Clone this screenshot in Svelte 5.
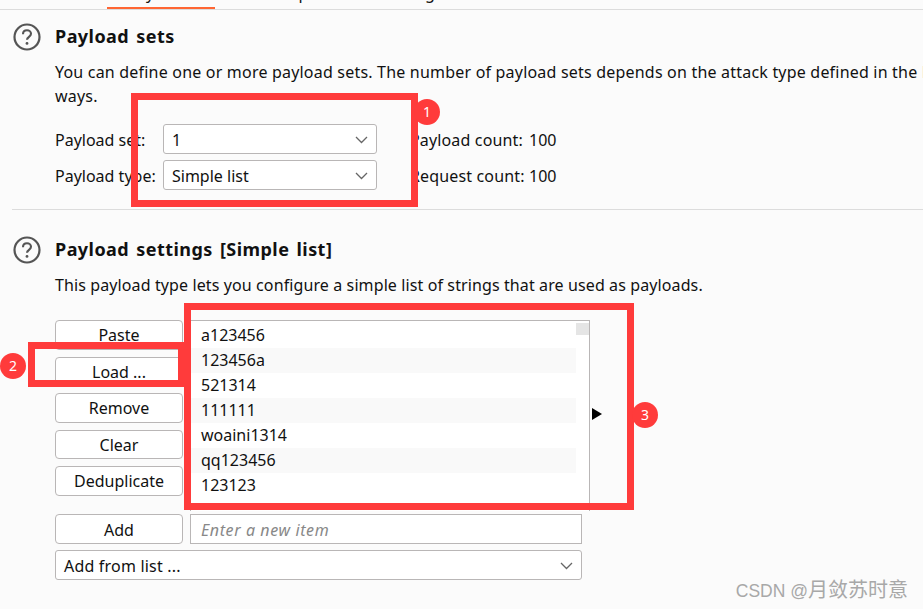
<script>
  const tabs = [
    { label: 'Positions', w: 107 },
    { label: 'Payloads', w: 108, active: true },
    { label: 'Resource pool', w: 127 },
    { label: 'Settings', w: 140 }
  ];
  const items = ['a123456', '123456a', '521314', '111111', 'woaini1314', 'qq123456', '123123'];
  const buttons = ['Paste', 'Load ...', 'Remove', 'Clear', 'Deduplicate'];
</script>

{#snippet help()}
  <svg class="help" width="28" height="28" viewBox="0 0 28 28" aria-hidden="true">
    <circle cx="14" cy="14" r="12.5" fill="none" stroke="#555" stroke-width="2.2" />
    <path d="M10 11.2c0-2.4 1.8-3.9 4-3.9s4 1.4 4 3.5c0 3-4 3-4 6" fill="none" stroke="#555" stroke-width="2.1" />
    <circle cx="14" cy="20.4" r="1.4" fill="#555" />
  </svg>
{/snippet}

{#snippet chevron()}
  <svg class="chev" width="13" height="8" viewBox="0 0 13 8" aria-hidden="true">
    <path d="M1 1l5.500 5.500 5.500-5.500" fill="none" stroke="#666" stroke-width="1.3" />
  </svg>
{/snippet}

<div class="page">
  <div class="tabs">
    {#each tabs as tab}
      <div class="tab" class:active={tab.active} style="width: {tab.w}px">{tab.label}</div>
    {/each}
  </div>

  <section class="sets">
    <div class="head">
      {@render help()}
      <h2>Payload sets</h2>
    </div>
    <p class="desc">You can define one or more payload sets. The number of payload sets depends on the attack type defined in the Positions tab. Various payload types are available<br />ways.</p>
    <div class="set-row">
      <span class="set-label">Payload set:</span>
      <div class="select small"><span>1</span>{@render chevron()}</div>
      <span class="count">Payload count:</span><span>100</span>
    </div>
    <div class="set-row">
      <span class="set-label">Payload type:</span>
      <div class="select small"><span>Simple list</span>{@render chevron()}</div>
      <span class="count">Request count:</span><span>100</span>
    </div>
  </section>

  <section class="settings">
    <div class="head">
      {@render help()}
      <h2>Payload settings [Simple list]</h2>
    </div>
    <p class="desc one">This payload type lets you configure a simple list of strings that are used as payloads.</p>

    <div class="list-row">
      <div class="btns">
        {#each buttons as b}
          <div class="btn">{b}</div>
        {/each}
      </div>
      <div class="listbox">
        <div class="rows">
          {#each items as item}
            <div class="item">{item}</div>
          {/each}
        </div>
        <div class="scroll"><div class="thumb"></div></div>
      </div>
      <svg class="arrow" width="10" height="12" viewBox="0 0 10 12" aria-hidden="true">
        <path d="M0 0l10 6L0 12z" fill="#000" />
      </svg>
    </div>

    <div class="add-row">
      <div class="btn">Add</div>
      <div class="input">Enter a new item</div>
    </div>
    <div class="select wide"><span>Add from list ...</span>{@render chevron()}</div>
  </section>

  <div class="mark m1"></div>
  <div class="mark m2"></div>
  <div class="mark m3"></div>
  <div class="badge b1">1</div>
  <div class="badge b2">2</div>
  <div class="badge b3">3</div>
  <div class="watermark">CSDN @<span class="cjk">月敛苏时意</span></div>
</div>

<style>
  :global(body) {
    margin: 0;
    background: #fbfbfb;
  }

  .page {
    position: relative;
    width: 923px;
    height: 609px;
    overflow: hidden;
    background: #fbfbfb;
    color: #111;
    font-family: "Noto Sans", "Open Sans", sans-serif;
    font-size: 16px;
    line-height: 24px;
  }

  /* tab strip, only the bottom of it is left in the crop */
  .tabs {
    display: flex;
    align-items: flex-end;
    height: 10px;
    overflow: hidden;
    box-sizing: border-box;
    border-bottom: 1px solid #dcdcdc;
  }

  .tab {
    flex: none;
    height: 9px;
    box-sizing: border-box;
    padding-bottom: 7px;
    display: flex;
    align-items: flex-end;
    justify-content: center;
    line-height: 18px;
  }

  .tab.active {
    padding-bottom: 5px;
    border-bottom: 2px solid #ff6633;
  }

  .sets {
    box-sizing: border-box;
    height: 200px;
    margin-left: 12px;
    padding: 13px 0 0 0;
    border-bottom: 1px solid #dcdcdc;
  }

  .settings {
    margin-left: 12px;
    padding-top: 26px;
  }

  .head {
    display: flex;
    align-items: center;
    height: 28px;
  }

  .help {
    flex: none;
    margin: 0 14px 0 1px;
  }

  h2 {
    margin: -2px 0 0;
    font-size: 18px;
    font-weight: 700;
    letter-spacing: 0.45px;
    word-spacing: 2px;
  }

  .desc {
    margin: 9px 0 0 43px;
    width: 868px;
    height: 48px;
    overflow: visible;
    white-space: nowrap;
    letter-spacing: 0.2px;
  }

  .desc.one {
    height: 24px;
    letter-spacing: 0.11px;
  }

  .set-row {
    display: flex;
    align-items: center;
    height: 30px;
    margin: 6px 0 0 43px;
  }

  .sets .desc + .set-row {
    margin-top: 17px;
  }

  .set-label {
    width: 108px;
  }

  .count {
    margin-left: 33px;
    width: 119px;
    letter-spacing: 0.15px;
  }

  .select {
    display: flex;
    align-items: center;
    justify-content: space-between;
    box-sizing: border-box;
    height: 30px;
    padding: 2px 8px 0;
    background: #fff;
    border: 1px solid #b9b6b6;
    border-radius: 3px;
  }

  .select.small {
    width: 214px;
    margin-bottom: 2px;
  }

  .select.wide {
    width: 527px;
    margin: 6px 0 0 43px;
    letter-spacing: 0.2px;
  }

  .chev {
    flex: none;
  }

  .list-row {
    display: flex;
    align-items: flex-start;
    margin: 23px 0 0 43px;
  }

  .btns {
    display: flex;
    flex-direction: column;
    gap: 7px;
  }

  .btn {
    box-sizing: border-box;
    width: 128px;
    height: 29.5px;
    background: #fff;
    border: 1px solid #b9b6b6;
    border-radius: 4px;
    text-align: center;
    line-height: 29px;
  }

  .listbox {
    display: flex;
    box-sizing: border-box;
    width: 400px;
    height: 191px;
    margin-left: 7px;
    padding: 2px 0 0 0;
    background: #fff;
    border: 1px solid #b9b6b6;
    border-bottom: 0;
  }

  .rows {
    width: 386px;
  }

  .item {
    height: 25px;
    line-height: 25px;
    padding-left: 10px;
  }

  .item:nth-child(even) {
    background: #f9f9f9;
  }

  .scroll {
    width: 13px;
  }

  .thumb {
    height: 12px;
    background: #e5e5e5;
  }

  .arrow {
    margin: 88px 0 0 2px;
  }

  .add-row {
    display: flex;
    gap: 7px;
    margin: 0 0 0 43px;
    padding-top: 3px;
  }

  .add-row .btn {
    height: 30px;
    line-height: 31px;
  }

  .input {
    box-sizing: border-box;
    width: 392px;
    height: 30px;
    padding-left: 10px;
    background: #fff;
    border: 1px solid #b9b6b6;
    color: #888;
    font-style: italic;
    letter-spacing: 0.6px;
    line-height: 31px;
  }

  /* annotations drawn on top of the screenshot */
  .mark {
    position: absolute;
    box-sizing: border-box;
    border: 7px solid #ff3b3b;
  }

  .m1 {
    left: 131px;
    top: 93px;
    width: 287px;
    height: 114px;
  }

  .m2 {
    left: 28px;
    top: 342px;
    width: 157px;
    height: 45px;
  }

  .m3 {
    left: 184px;
    top: 303px;
    width: 450px;
    height: 207px;
  }

  .badge {
    position: absolute;
    width: 26px;
    height: 26px;
    border-radius: 50%;
    background: #ff3b3b;
    color: #fff;
    font-size: 14px;
    line-height: 26px;
    text-align: center;
  }

  .b1 {
    left: 414px;
    top: 99px;
  }

  .b2 {
    left: 0;
    top: 353px;
  }

  .b3 {
    left: 632px;
    top: 402px;
  }

  .watermark {
    position: absolute;
    right: 15px;
    top: 577px;
    color: #a8a8a8;
    font-family: "Liberation Sans", "Noto Sans CJK SC", sans-serif;
    font-size: 17.500px;
    line-height: 26px;
  }

  .cjk {
    font-size: 20px;
  }
</style>
